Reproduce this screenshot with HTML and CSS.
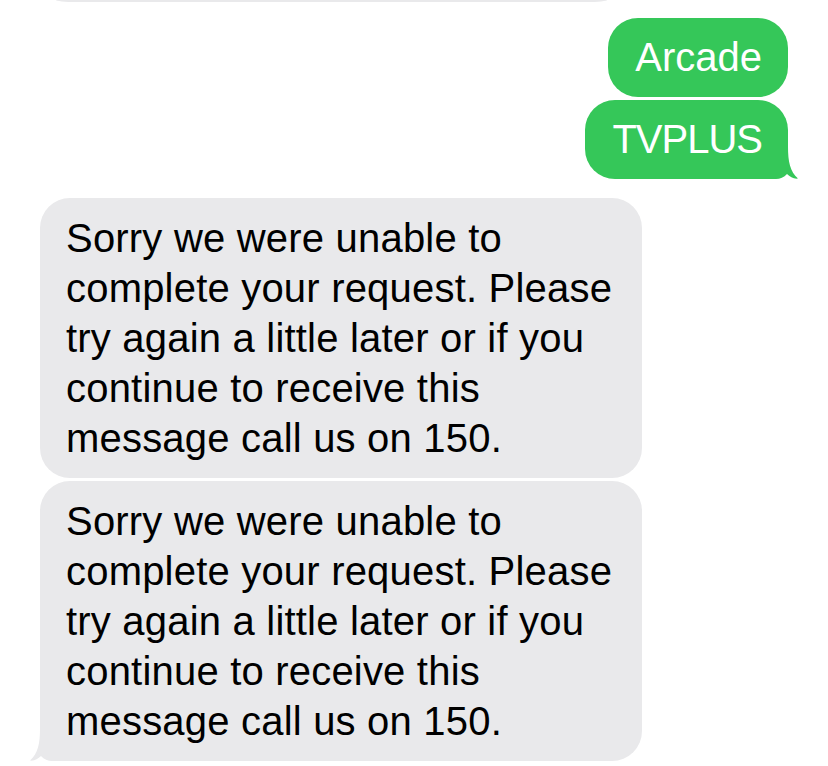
FILE: index.html
```html
<!DOCTYPE html>
<html lang="en">
<head>
<meta charset="utf-8">
<title>Messages</title>
<link rel="stylesheet" href="styles.css">
</head>
<body>
<div class="thread">
  <div class="remnant"></div>
  <div class="bubble out first"><span class="txt">Arcade</span></div>
  <div class="bubble out last"><span class="txt tight">TVPLUS</span>
    <svg class="tail tail-out" width="44" height="32" viewBox="0 0 44 32"><path d="M0,32 L0,0 L32,0 C32,14 34,25 42,31.5 C38,32.2 34,30 31,27 C28,30.5 24,32 20,32 Z"/></svg>
  </div>
  <div class="bubble in first"><span class="txt">Sorry we were unable to<br>complete your request. Please<br>try again a little later or if you<br>continue to receive this<br>message call us on 150.</span></div>
  <div class="bubble in last"><span class="txt">Sorry we were unable to<br>complete your request. Please<br>try again a little later or if you<br>continue to receive this<br>message call us on 150.</span>
    <svg class="tail tail-in" width="44" height="32" viewBox="0 0 44 32"><path d="M0,32 L0,0 L32,0 C32,14 34,25 42,31.5 C38,32.2 34,30 31,27 C28,30.5 24,32 20,32 Z"/></svg>
  </div>
</div>
</body>
</html>
```
FILE: styles.css
```css
html, body {
  margin: 0;
  padding: 0;
  background: #ffffff;
}
.thread {
  width: 828px;
  height: 766px;
  overflow: hidden;
  display: flex;
  flex-direction: column;
  font-family: "Liberation Sans", Arial, sans-serif;
  font-size: 40px;
  line-height: 50px;
}
.remnant {
  margin-left: 56px;
  width: 551px;
  height: 2px;
  background: #e9e9eb;
  border-radius: 0 0 20px 20px / 0 0 2px 2px;
}
.bubble {
  position: relative;
  box-sizing: border-box;
  border-radius: 30px;
}
.txt {
  position: relative;
  z-index: 1;
}
.tight {
  letter-spacing: -1px;
}
.out {
  align-self: flex-end;
  margin-right: 40px;
  background: #35c759;
  color: #ffffff;
  padding: 14px 26px 15px 27px;
}
.out.first {
  margin-top: 16px;
}
.out.last {
  margin-top: 3px;
}
.in {
  align-self: flex-start;
  margin-left: 40px;
  width: 602px;
  background: #e9e9eb;
  color: #000000;
  padding: 15px 26px;
  letter-spacing: 0.2px;
}
.in.first {
  margin-top: 19px;
}
.in.last {
  margin-top: 3px;
}
.tail {
  position: absolute;
  bottom: 0;
  display: block;
  z-index: 0;
}
.tail-out {
  right: -12px;
  fill: #35c759;
}
.tail-in {
  left: -12px;
  fill: #e9e9eb;
  transform: scaleX(-1);
}
```
